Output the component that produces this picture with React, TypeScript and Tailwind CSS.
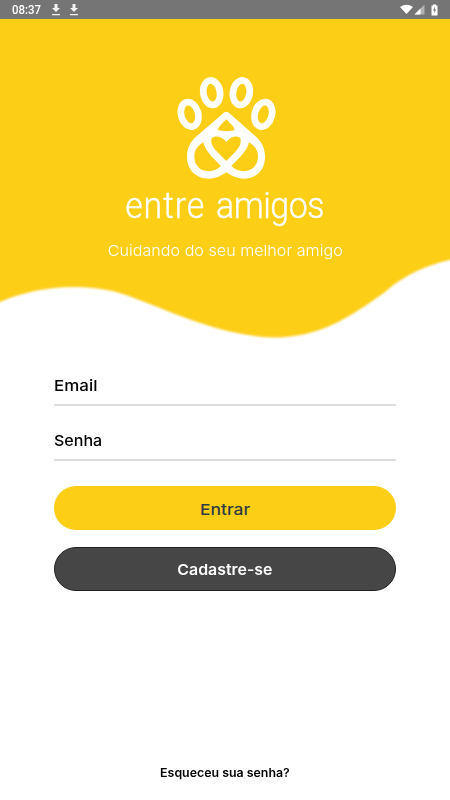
const Download = () => (
  <svg viewBox="0 0 10 12" className="h-3 w-2.5 fill-[#f2f2f2]"><path d="M3.5 0h3v4H9L5 8 1 4h2.5zM1 10h8v1.2H1z" /></svg>
);

const Paw = () => (
  <svg viewBox="0 0 360 360" className="h-[120px] w-[120px] shrink-0" fill="none" stroke="#fff" strokeWidth="20" strokeLinejoin="round">
    <ellipse cx="74" cy="148" rx="25.5" ry="37.5" transform="rotate(-15 74 148)" />
    <ellipse cx="140" cy="83" rx="25" ry="37" transform="rotate(-9 140 83)" />
    <ellipse cx="229" cy="83" rx="25" ry="37" transform="rotate(9 229 83)" />
    <ellipse cx="295" cy="148" rx="25.5" ry="37.5" transform="rotate(15 295 148)" />
    <path fill="#fff" stroke="none" fillRule="evenodd" d="M184 140 C177 140 170 149 162 156 L92 216 C75 232 66 250 66 276 C66 313 92 341 131 341 C153 341 168 333 184 322 C200 333 215 341 237 341 C276 341 300 313 300 276 C300 250 291 232 274 216 L206 156 C198 149 191 140 184 140Z M184 163 L203 182 Q208 188 209 196 Q184 201 158 196 Q160 188 165 182Z M184 231 C198 213 218 211 226 220 C232 243 215 257 184 288 C153 257 134 243 140 220 C150 211 170 213 184 231Z M115 232 C121 258 142 277 168 303 C155 316 139 320 125 318 C103 316 88 298 88 275 C88 254 99 242 115 232Z M252 232 C246 258 225 277 199 303 C212 316 228 320 242 318 C264 316 279 298 279 275 C279 254 268 242 252 232Z" />
  </svg>
);

export default function App() {
  return (
    <main className="relative flex h-[800px] w-[450px] flex-col overflow-hidden bg-white font-['Inter',sans-serif]">
      <header className="relative z-10 flex h-[19px] shrink-0 items-center bg-[#757575] pl-3 pr-3 text-white">
        <span className="w-[39px] origin-left scale-x-[.95] pt-0.5 font-['Roboto',sans-serif] text-[12px] font-medium leading-[17px]">08:37</span>
        <div className="flex gap-2"><Download /><Download /></div>
        <svg viewBox="0 0 40 12" className="ml-auto h-3 w-10 translate-x-px" fill="#fff">
          <path d="M1 3Q7.5-1.5 14 3L7.5 10Z" />
          <path d="M15.5 10.5L25.5 .5V10.5Z" opacity=".45" /><path d="M15.5 10.5L21.5 4.5V10.5Z" />
          <path d="M32.5 1.5h1.5V.5h3v1h1.5v10h-6z" /><path d="M36 2.5l-2 4h1.4v3L37 5.500h-1.2z" fill="#757575" />
        </svg>
      </header>
      <svg viewBox="0 0 450 340" className="absolute left-0 top-0 h-[340px] w-[450px]">
        <path fill="#fdce16" className="blur-[0.8px]" d="M-5-5H455V259L450 260C430 264 405 274 385 292C345 321 317 337 275 337.5C210 336 150 300 112 291C75 283 34 287 0 302L-5 304Z" />
      </svg>
      <section className="relative flex h-[321px] shrink-0 flex-col items-center pt-[46px] text-white">
        <Paw />
        <h1 className="h-[49px] scale-x-[.915] whitespace-nowrap font-['Roboto',sans-serif] text-[37px] font-light leading-[42px] [word-spacing:3px] [-webkit-text-stroke:0.4px_white]"><span className="tracking-[0.9px]">entre</span> <span className="tracking-[-0.5px]">amigos</span></h1>
        <p className="mt-1.5 scale-x-[1.075] whitespace-nowrap text-[15px] font-light leading-[22px]">Cuidando do seu melhor amigo</p>
      </section>
      <form className="mx-[54px] flex flex-col text-black">
        <label className="flex h-[66px] items-end border-b-2 border-[#dcdcdc] pb-[7px] text-[15px] font-medium leading-[22px]"><span className="origin-left scale-x-[1.13]">Email</span></label>
        <label className="flex h-[55px] items-end border-b-2 border-[#dcdcdc] pb-[7px] text-[15px] font-medium leading-[22px]"><span className="origin-left scale-x-[1.07]">Senha</span></label>
        <button type="button" className="mt-[25px] flex h-11 items-center justify-center rounded-full bg-[#fdce16] pt-1 text-[15px] font-medium text-[#303c40]"><span className="translate-x-[0.5px] scale-x-[1.16]">Entrar</span></button>
        <button type="button" className="mt-[17px] flex h-11 items-center justify-center rounded-full border border-[#202020] bg-[#464646] pt-0.5 text-[15px] font-semibold text-white"><span className="scale-x-[1.06]">Cadastre-se</span></button>
      </form>
      <a className="mb-[17px] mt-auto scale-x-[1.03] self-center text-[12px] font-semibold leading-5 text-black">Esqueceu sua senha?</a>
    </main>
  );
}
